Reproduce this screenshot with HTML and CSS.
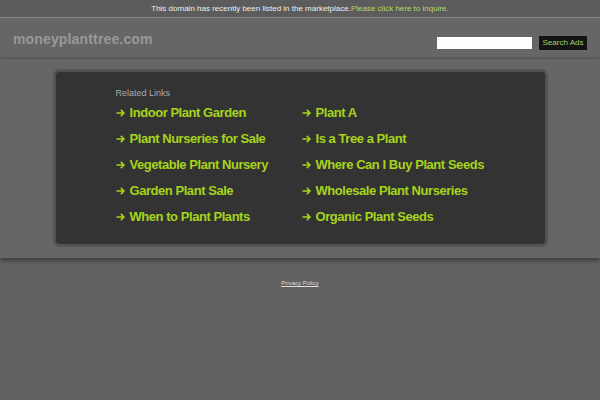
FILE: index.html
```html
<!DOCTYPE html>
<html>
<head>
<meta charset="utf-8">
<link rel="stylesheet" href="styles.css">
</head>
<body>
<div class="topbar">This domain has recently been listed in the marketplace.<a href="#" class="inquire">Please click here to inquire.</a></div>
<div class="header">
  <div class="logo">moneyplanttree.com</div>
  <form class="search">
    <input type="text" class="search-input">
    <button type="button" class="search-btn">Search Ads</button>
  </form>
</div>
<div class="main">
  <div class="panel">
    <div class="related">Related Links</div>
    <div class="links">
      <a href="#" class="link"><svg class="arrow" viewBox="0 0 9 8"><path d="M0.5 4H8M4.8 0.9L8 4L4.8 7.1"/></svg>Indoor Plant Garden</a>
      <a href="#" class="link"><svg class="arrow" viewBox="0 0 9 8"><path d="M0.5 4H8M4.8 0.9L8 4L4.8 7.1"/></svg>Plant A</a>
      <a href="#" class="link"><svg class="arrow" viewBox="0 0 9 8"><path d="M0.5 4H8M4.8 0.9L8 4L4.8 7.1"/></svg>Plant Nurseries for Sale</a>
      <a href="#" class="link"><svg class="arrow" viewBox="0 0 9 8"><path d="M0.5 4H8M4.8 0.9L8 4L4.8 7.1"/></svg>Is a Tree a Plant</a>
      <a href="#" class="link"><svg class="arrow" viewBox="0 0 9 8"><path d="M0.5 4H8M4.8 0.9L8 4L4.8 7.1"/></svg>Vegetable Plant Nursery</a>
      <a href="#" class="link"><svg class="arrow" viewBox="0 0 9 8"><path d="M0.5 4H8M4.8 0.9L8 4L4.8 7.1"/></svg>Where Can I Buy Plant Seeds</a>
      <a href="#" class="link"><svg class="arrow" viewBox="0 0 9 8"><path d="M0.5 4H8M4.8 0.9L8 4L4.8 7.1"/></svg>Garden Plant Sale</a>
      <a href="#" class="link"><svg class="arrow" viewBox="0 0 9 8"><path d="M0.5 4H8M4.8 0.9L8 4L4.8 7.1"/></svg>Wholesale Plant Nurseries</a>
      <a href="#" class="link"><svg class="arrow" viewBox="0 0 9 8"><path d="M0.5 4H8M4.8 0.9L8 4L4.8 7.1"/></svg>When to Plant Plants</a>
      <a href="#" class="link"><svg class="arrow" viewBox="0 0 9 8"><path d="M0.5 4H8M4.8 0.9L8 4L4.8 7.1"/></svg>Organic Plant Seeds</a>
    </div>
  </div>
</div>
<div class="footer"><a href="#" class="privacy">Privacy Policy</a></div>
</body>
</html>
```
FILE: styles.css
```css
html, body {
  margin: 0;
  padding: 0;
  background: #616161;
  font-family: "Liberation Sans", Arial, sans-serif;
}
.topbar {
  height: 17px;
  line-height: 17px;
  background: #5c5c5c;
  border-bottom: 1px solid #858585;
  color: #eeeeee;
  font-size: 8px;
  text-align: center;
}
.inquire {
  color: #b6d86a;
  text-decoration: none;
}
.header {
  height: 40px;
  background: #666666;
  border-bottom: 1px solid #5a5a5a;
  display: flex;
  align-items: center;
  justify-content: space-between;
  padding: 0 13px;
}
.logo {
  color: #999999;
  font-size: 14px;
  font-weight: bold;
  letter-spacing: 0.15px;
  margin-top: 1px;
}
.search {
  display: flex;
  align-items: center;
  gap: 7px;
  margin: 9px 0 0 0;
}
.search-input {
  width: 95px;
  height: 12px;
  border: none;
  padding: 0;
  margin: 0;
  background: #ffffff;
}
.search-btn {
  height: 14px;
  width: 48px;
  padding: 0;
  margin: 0;
  border: none;
  background: #141414;
  color: #a6d26a;
  font-family: "Liberation Sans", Arial, sans-serif;
  font-size: 8px;
}
.main {
  background: #666666;
  height: 199px;
  box-shadow: 0 2px 5px rgba(0,0,0,0.45);
  padding-top: 11px;
  box-sizing: border-box;
}
.panel {
  width: 493px;
  height: 176px;
  box-sizing: border-box;
  margin: 0 auto;
  background: #333333;
  border: 2px solid #525252;
  border-radius: 6px;
  box-shadow: 0 0 2px rgba(0,0,0,0.5);
  padding: 16px 0 0 60px;
}
.related {
  color: #aaaaaa;
  font-size: 9px;
  height: 12px;
}
.links {
  display: grid;
  grid-template-columns: 186px auto;
  grid-auto-rows: 26px;
  margin-top: 0;
}
.link {
  color: #a6d41c;
  font-size: 13px;
  font-weight: bold;
  letter-spacing: -0.45px;
  text-decoration: none;
  line-height: 16px;
  display: flex;
  align-items: center;
}
.arrow {
  width: 9px;
  height: 8px;
  margin: 0 5px 0 0;
  fill: none;
  stroke: #a6d41c;
  stroke-width: 1.5;
  flex: none;
}
.footer {
  text-align: center;
  padding-top: 13px;
}
.privacy {
  color: #dddddd;
  font-size: 6px;
}
```
